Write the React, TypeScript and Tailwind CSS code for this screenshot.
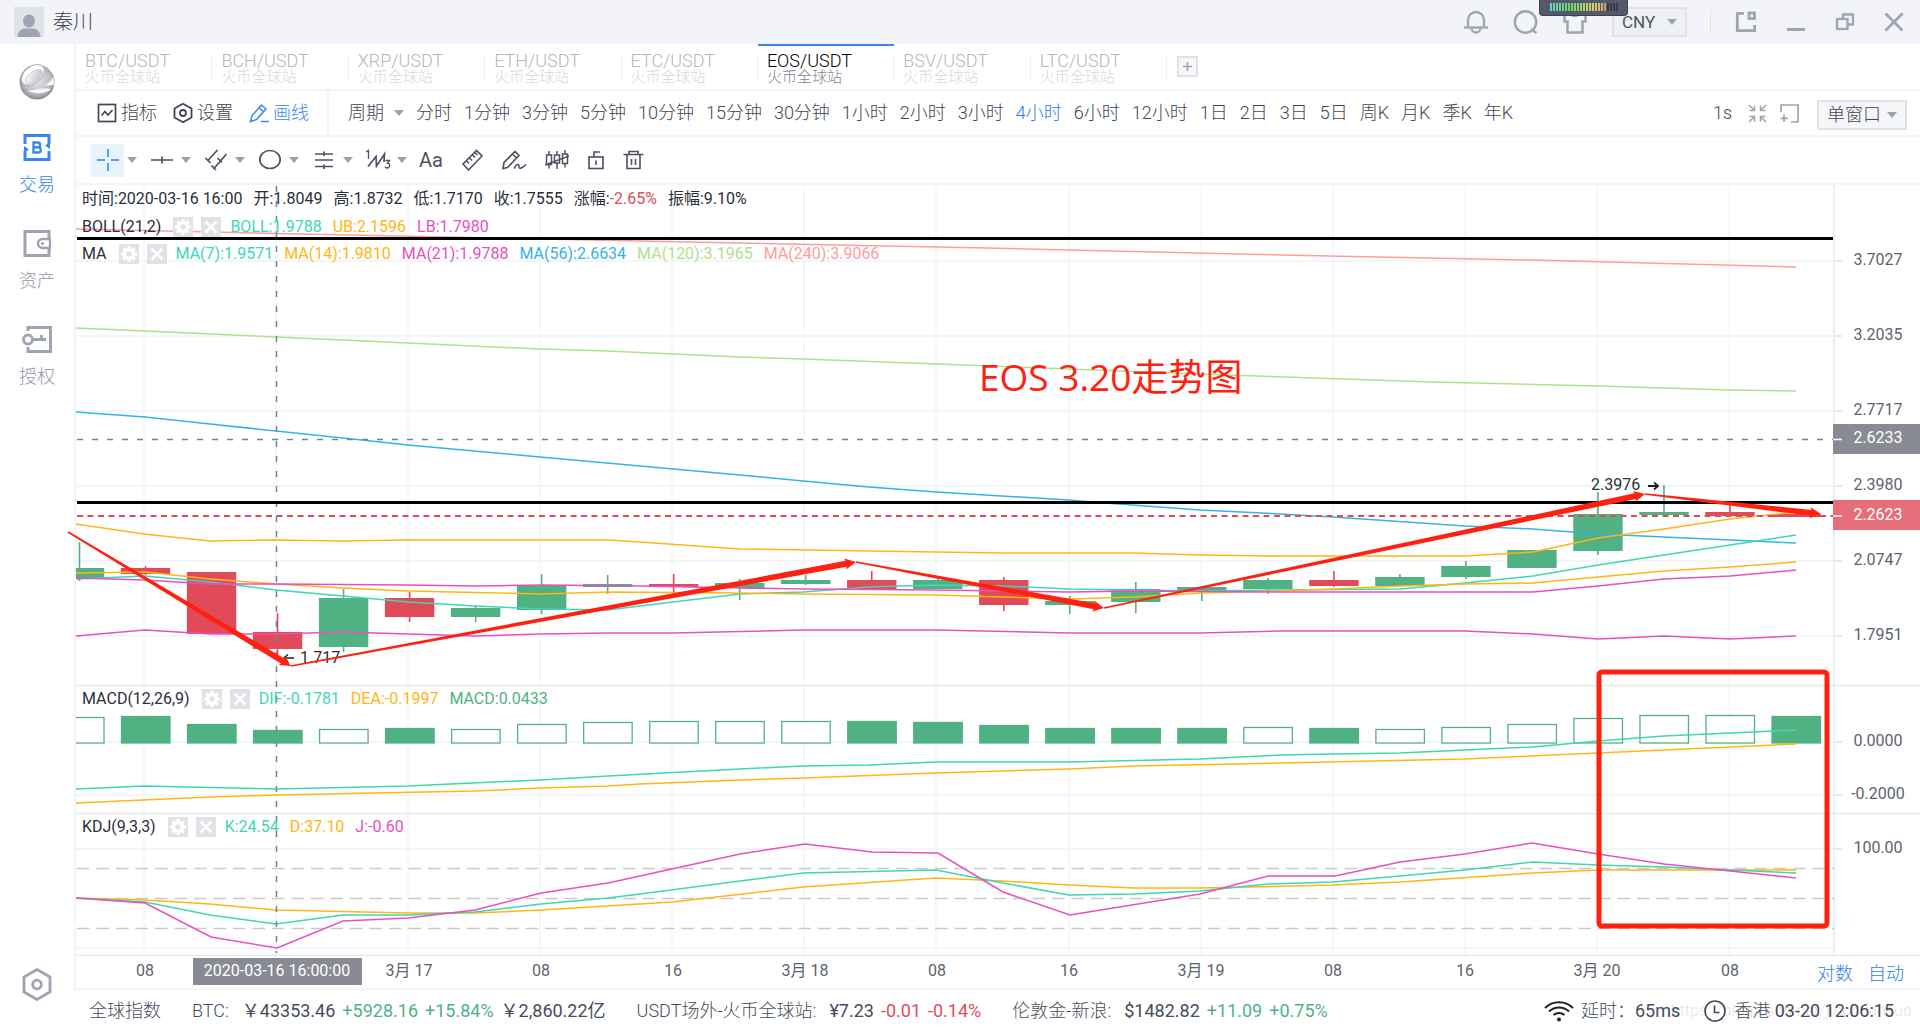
import React, { useState } from 'react';

const TEAL = '#3ed6b5';
const ORANGE = '#ffb612';
const MAGENTA = '#ea4fc0';
const BLUE = '#34b3e8';
const LIME = '#b0e08a';
const PINK = '#ff9d9a';
const GREEN = '#50b283';
const RED = '#e14b59';
const MARK = '#ff2010';

// ---------- data ----------

const pairs = ['BTC/USDT', 'BCH/USDT', 'XRP/USDT', 'ETH/USDT', 'ETC/USDT', 'EOS/USDT', 'BSV/USDT', 'LTC/USDT'];

const periods = [
  '分时', '1分钟', '3分钟', '5分钟', '10分钟', '15分钟', '30分钟', '1小时', '2小时', '3小时', '4小时',
  '6小时', '12小时', '1日', '2日', '3日', '5日', '周K', '月K', '季K', '年K',
];

// up/down, body top, body bottom, wick top, wick bottom
type Candle = ['u' | 'd', number, number, number, number];

const candles: Candle[] = [
  ['u', 568, 579, 542, 581], ['d', 568, 574, 566, 575], ['d', 572, 634, 572, 634], ['d', 632, 649, 613, 656],
  ['u', 598, 647, 589, 652], ['d', 598, 617, 592, 622], ['u', 608, 617, 606, 622], ['u', 585, 610, 574, 614],
  ['u', 584, 587, 575, 594], ['d', 584, 587, 574, 593], ['u', 583, 588, 579, 600], ['u', 580, 584, 575, 585],
  ['d', 580, 590, 571, 590], ['u', 580, 589, 578, 589], ['d', 580, 605, 577, 611], ['u', 601, 605, 596, 614],
  ['u', 589, 602, 582, 613], ['u', 587, 591, 587, 601], ['u', 580, 589, 578, 594], ['d', 580, 586, 571, 587],
  ['u', 577, 586, 574, 586], ['u', 566, 577, 561, 579], ['u', 550, 568, 550, 568], ['u', 514, 551, 492, 555],
  ['u', 512, 515, 485, 516], ['d', 512, 516, 505, 517], ['d', 514, 517, 514, 517],
];

// filled or hollow, bar top
const macdBars: ['f' | 'h', number][] = [
  ['h', 717], ['f', 716], ['f', 724], ['f', 730], ['h', 729], ['f', 728], ['h', 729], ['h', 724], ['h', 722],
  ['h', 721], ['h', 721], ['h', 721], ['f', 721], ['f', 722], ['f', 725], ['f', 728], ['f', 728], ['f', 728],
  ['h', 727], ['f', 728], ['h', 729], ['h', 727], ['h', 724], ['h', 718], ['h', 715], ['h', 715], ['f', 716],
];

const lines: { color: string; points: string }[] = [
  { color: PINK, points: '76,229 300,234 640,241 987,248 1280,255 1532,260 1796,267' },
  { color: LIME, points: '76,328 145,331 276,337 408,343 540,349 608,351 740,357 803,359 937,364 1069,369 1225,375 1433,382 1598,386 1730,390 1796,391' },
  { color: BLUE, points: '76,412 145,417 210,424 276,431 343,438 408,445 540,457 640,466 740,475 803,481 869,487 936,492 1069,500 1105,503 1200,510 1280,514 1333,517 1465,526 1533,529 1598,534 1664,537 1796,543' },
  { color: ORANGE, points: '76,524 144,534 210,541 276,540 343,541 408,540 608,540 640,542 740,549 870,551 936,552 1003,553 1134,553 1200,555 1280,556 1465,556 1533,552 1598,538 1664,529 1730,519 1796,512' },
  { color: TEAL, points: '76,579 145,576 210,582 276,590 343,596 408,602 475,606 541,609 608,610 640,606 740,594 803,592 869,587 936,585 1003,586 1069,589 1134,590 1200,591 1280,590 1400,589 1465,583 1533,576 1598,565 1664,555 1730,545 1796,535' },
  { color: ORANGE, points: '76,573 145,572 210,579 276,584 343,588 408,591 541,594 608,592 740,593 803,594 936,595 1003,597 1069,599 1134,597 1200,593 1280,591 1333,589 1400,586 1465,584 1533,583 1598,577 1664,571 1730,567 1796,562' },
  { color: MAGENTA, points: '76,578 145,580 210,584 276,584 408,585 475,586 541,585 640,586 740,588 803,589 936,590 1069,592 1134,591 1280,592 1533,592 1598,586 1664,579 1730,576 1796,570' },
  { color: MAGENTA, points: '76,636 145,630 210,634 276,634 343,632 408,634 475,636 541,634 608,633 673,633 803,630 936,630 1069,633 1200,633 1280,631 1465,631 1533,634 1598,639 1664,636 1730,639 1796,636' },
  { color: ORANGE, points: '76,803 210,797 276,795 475,791 540,788 608,786 640,784 740,780 803,778 936,773 1069,769 1134,766 1280,763 1465,759 1598,753 1730,747 1796,744' },
  { color: TEAL, points: '76,789 145,786 276,789 408,786 540,780 608,776 740,769 803,766 869,765 936,762 1069,762 1200,759 1280,755 1333,754 1400,753 1465,750 1533,747 1598,741 1664,736 1796,730' },
  { color: ORANGE, points: '76,898 145,900 210,904 276,910 408,913 475,913 541,910 640,904 673,902 803,887 936,878 1003,881 1069,885 1134,888 1200,888 1333,885 1400,882 1533,873 1598,870 1796,870' },
  { color: TEAL, points: '76,898 145,902 210,915 276,924 343,915 408,915 475,912 541,904 608,898 640,894 740,881 803,873 936,870 1003,883 1069,895 1134,894 1200,891 1268,884 1333,882 1400,876 1465,870 1533,862 1598,865 1664,867 1730,870 1796,873' },
  { color: MAGENTA, points: '76,898 145,903 211,937 277,948 343,921 408,918 475,910 541,893 608,883 640,876 740,854 805,844 872,852 938,853 1003,892 1070,915 1200,894 1268,876 1335,876 1400,862 1465,854 1532,843 1598,854 1664,864 1730,871 1796,878' },
];

const gridX = [144, 276, 408, 540, 672, 804, 936, 1069, 1201, 1333, 1465, 1597, 1729];
const gridY: [number, string][] = [
  [261, '3.7027'], [336, '3.2035'], [411, '2.7717'], [486, '2.3980'], [561, '2.0747'], [636, '1.7951'],
  [742, '0.0000'], [795, '-0.2000'], [849, '100.00'], [948, ''],
];
const xLabels: [number, string][] = [
  [145, '08'], [409, '3月 17'], [541, '08'], [673, '16'], [805, '3月 18'], [937, '08'], [1069, '16'],
  [1201, '3月 19'], [1333, '08'], [1465, '16'], [1597, '3月 20'], [1730, '08'],
];
const trend: [number, number][] = [[68, 532], [291, 666], [856, 562], [1104, 608], [1645, 494], [1821, 514]];

// ---------- small parts ----------

interface CaretProps {
  className?: string;
}

const Caret: React.FC<CaretProps> = ({ className = '' }) => (
  <svg viewBox="0 0 10 6" className={`h-1.5 w-2.5 shrink-0 fill-[#9aa1ae] ${className}`}>
    <path d="M0 0h10L5 6z" />
  </svg>
);

const GearBox = () => (
  <button aria-label="设置" className="h-5 w-5 bg-[#dfe2e7]">
    <svg viewBox="0 0 20 20" className="h-5 w-5">
      <circle cx="10" cy="10" r="4.4" fill="none" stroke="#fff" strokeWidth="3.4" />
      <g stroke="#fff" strokeWidth="3.2">
        <path d="M10 2v3M10 15v3M2 10h3M15 10h3M4.3 4.3l2 2M13.7 13.7l2 2M4.3 15.7l2-2M13.7 6.3l2-2" />
      </g>
    </svg>
  </button>
);

const CloseBox = () => (
  <button aria-label="关闭" className="h-5 w-5 bg-[#dfe2e7]">
    <svg viewBox="0 0 20 20" className="h-5 w-5">
      <path d="M4.500 4.500l11 11M15.500 4.500l-11 11" stroke="#fff" strokeWidth="2.800" />
    </svg>
  </button>
);

interface LegendProps {
  name: string;
  values: { text: string; color: string }[];
  className?: string;
}

const Legend: React.FC<LegendProps> = ({ name, values, className = '' }) => (
  <div className={`flex h-[27px] items-center gap-2 ${className}`}>
    <span className="mr-1">{name}</span>
    <GearBox />
    <CloseBox />
    <div className="ml-px flex gap-[11px]">
      {values.map((v) => (
        <span key={v.text} className={v.color}>{v.text}</span>
      ))}
    </div>
  </div>
);

// ---------- header ----------

const Header = () => (
  <header className="relative flex h-11 items-center bg-[#f3f4f8] pl-3.5 pr-4 font-light text-[#9ea4b0]">
    <svg viewBox="0 0 30 30" className="h-[30px] w-[30px]">
      <rect width="30" height="30" fill="#dfe2e7" />
      <ellipse cx="15" cy="14" rx="6" ry="6.500" fill="#9ea4b0" />
      <path d="M3.500 30c0-5.500 4-8.500 8-8.500h7c4 0 8 3 8 8.500z" fill="#9ea4b0" />
    </svg>
    <span className="ml-[9px] text-xl leading-7 text-[#3f4655]">秦川</span>

    <div className="ml-auto flex items-center gap-[25px]">
      <button aria-label="通知">
        <svg viewBox="0 0 24 24" className="h-6 w-6" fill="none" stroke="currentColor" strokeWidth="2.300">
          <path d="M4 17.500V10a8 8 0 0 1 16 0v7.500" />
          <path d="M0 17.500h24" />
          <path d="M7.500 18a4.500 4.500 0 0 0 9 0" />
        </svg>
      </button>
      <button aria-label="搜索">
        <svg viewBox="0 0 25 24" className="h-6 w-[25px]" fill="none" stroke="currentColor" strokeWidth="2.400">
          <circle cx="12.500" cy="12" r="10.700" />
          <path d="M18 19l5.500 4" />
        </svg>
      </button>
      <button aria-label="皮肤">
        <svg viewBox="0 0 24 24" className="h-6 w-6" fill="none" stroke="currentColor" strokeWidth="2.500">
          <path d="M1.500 3.500H8c1 3 7 3 8 0h6.500v8H19.500V22.500h-15V11.500h-3z" />
        </svg>
      </button>
      <label className="relative flex items-center">
        <select aria-label="货币" className="h-[30px] w-[75px] appearance-none border-2 border-[#dfe2e8] bg-[#eef0f4] pl-2 text-[17px] font-normal leading-6 text-[#4b5263]">
          <option>CNY</option>
        </select>
        <Caret className="pointer-events-none absolute right-2.5" />
      </label>
    </div>
    <div className="ml-[23px] h-6 w-px bg-[#dfe2e8]" />
    <div className="ml-6 flex items-center gap-[29px]">
      <button aria-label="弹出">
        <svg viewBox="0 0 22 22" className="h-[22px] w-[22px]" fill="none" stroke="currentColor" strokeWidth="2.800">
          <path d="M9 2.300H2.300v17.400h17.400V14" />
          <rect x="14" y="2" width="5.500" height="5.500" />
        </svg>
      </button>
      <button aria-label="最小化">
        <svg viewBox="0 0 20 22" className="h-[22px] w-5">
          <path d="M1 18.500h18" stroke="currentColor" strokeWidth="3" />
        </svg>
      </button>
      <button aria-label="还原">
        <svg viewBox="0 0 20 20" className="h-5 w-5" fill="none" stroke="currentColor" strokeWidth="2.300">
          <path d="M8 7V2.500h10v10h-5" />
          <rect x="2" y="7" width="10.500" height="10" />
        </svg>
      </button>
      <button aria-label="关闭窗口">
        <svg viewBox="0 0 20 20" className="h-5 w-5" stroke="currentColor" strokeWidth="2.800">
          <path d="M1.500 1.500l17 17M18.500 1.500l-17 17" />
        </svg>
      </button>
    </div>

    {/* level meter docked to the screen edge */}
    <div className="absolute right-[292px] top-0 z-10 h-4 w-[89px] rounded-b border border-t-0 border-[#3c424f] bg-[#545a69]">
      <div className="ml-2.5 mt-[3px] flex gap-px">
        {Array.from({ length: 23 }, (_, i) => (
          <i
            key={i}
            className="h-2 w-0.5"
            style={{ background: i < 19 ? `hsl(${165 - i * 7.5} 55% 62%)` : '#373c48' }}
          />
        ))}
      </div>
    </div>
  </header>
);

// ---------- sidebar ----------

const Sidebar = () => (
  <aside className="flex w-[74px] shrink-0 flex-col items-center pb-[27px] pt-5 text-lg font-light leading-6 text-[#9097a5]">
    <svg viewBox="0 0 36 36" className="h-9 w-9">
      <defs>
        <radialGradient id="ball" cx="0.5" cy="0.45" r="0.55">
          <stop offset="0" stopColor="#e9e9eb" />
          <stop offset="0.7" stopColor="#bcbdc2" />
          <stop offset="1" stopColor="#85878f" />
        </radialGradient>
        <linearGradient id="ring" x1="0" y1="0" x2="1" y2="1">
          <stop offset="0" stopColor="#ffffff" />
          <stop offset="1" stopColor="#b9babf" />
        </linearGradient>
      </defs>
      <circle cx="18" cy="18" r="17.500" fill="url(#ball)" />
      <ellipse cx="14" cy="11" rx="13" ry="8.500" transform="rotate(-38 14 11)" fill="#fff" stroke="#a9aab0" strokeWidth="0.800" />
      <ellipse cx="15" cy="13" rx="10" ry="5.500" transform="rotate(-38 15 13)" fill="url(#ring)" stroke="#c9cace" strokeWidth="0.800" />
      <path d="M34 13c1 3 1 5 .5 8l-9 .5c4-2 7-4.500 8.500-8.500z" fill="#fff" />
      <path d="M9 27c8-2 15-3 23-2-4 4-12 6-23 2z" fill="#f6f6f7" />
    </svg>

    <button className="mt-[34px] flex flex-col items-center gap-3 text-[#3a86f0]">
      <svg viewBox="0 0 28 27" className="h-[27px] w-7" fill="none" stroke="currentColor" strokeWidth="3">
        <path d="M2 10V1.500h24V10M2 17v8.500h24V17" />
        <path d="M1 12l5 3.500L1 19z M27 8l-5 3.500 5 3.500z" fill="currentColor" stroke="none" />
        <path d="M10.500 8.500h4.200a2.400 2.400 0 0 1 0 4.800h-4.200zM10.500 13.300h4.700a2.600 2.600 0 0 1 0 5.200h-4.700z" strokeWidth="2.400" />
      </svg>
      交易
    </button>
    <button className="mt-[33px] flex flex-col items-center gap-3">
      <svg viewBox="0 0 28 27" className="h-[27px] w-7" fill="none" stroke="#9ea4b0" strokeWidth="3">
        <path d="M26 9V1.500H2v24h24V18" />
        <path d="M27 9h-7.500a4.500 4.500 0 0 0 0 9H27z" strokeWidth="2.400" />
        <circle cx="19.500" cy="13.500" r="1.600" fill="#9ea4b0" stroke="none" />
      </svg>
      资产
    </button>
    <button className="mt-[33px] flex flex-col items-center gap-3">
      <svg viewBox="0 0 30 27" className="h-[27px] w-[30px]" fill="none" stroke="#9ea4b0" strokeWidth="3">
        <path d="M6 5V1.500h22.500v24H6V21" />
        <circle cx="6" cy="13.500" r="4.500" strokeWidth="2.800" />
        <path d="M10 13.500h14M19.500 13.500V9" strokeWidth="2.800" />
      </svg>
      授权
    </button>

    <button aria-label="系统设置" className="mt-auto">
      <svg viewBox="0 0 30 33" className="h-[33px] w-[30px]" fill="none" stroke="#9ea4b0" strokeWidth="2.800">
        <path d="M15 1.500l13 7.500v15l-13 7.500L2 24V9z" />
        <circle cx="15" cy="16.500" r="4.300" />
      </svg>
    </button>
  </aside>
);

// ---------- bars above the chart ----------

const PairTabs: React.FC<{ active: string; onSelect: (pair: string) => void }> = ({ active, onSelect }) => (
  <nav className="flex h-[47px] items-start border-b-2 border-[#f3f4f8] font-light">
    <div className="grid w-[1091px] grid-cols-8">
      {pairs.map((pair) => (
        <button
          key={pair}
          onClick={() => onSelect(pair)}
          className={`relative flex h-[45px] flex-col border-t-2 pl-[9px] pt-1.5 text-left ${
            pair === active ? 'border-[#3a86f0] text-black' : 'border-transparent text-[#b4b7bd]'
          }`}
        >
          <span className="text-lg leading-[18px]">{pair}</span>
          <span className={`text-[15px] leading-[14px] ${pair === active ? 'text-[#7f8694]' : 'text-[#d6d9df]'}`}>火币全球站</span>
          <i className="absolute right-0 top-2.5 h-6 w-px bg-[#eceef3]" />
        </button>
      ))}
    </div>
    <button aria-label="添加" className="ml-2.5 mt-3 h-[21px] w-[21px] border-2 border-[#dfe2e8] bg-[#f5f6f8]">
      <svg viewBox="0 0 17 17" className="h-[17px] w-[17px] stroke-[#9ea4b0]">
        <path d="M8.500 4v9M4 8.500h9" strokeWidth="1.600" />
      </svg>
    </button>
  </nav>
);

const PeriodBar: React.FC<{ active: string; onSelect: (p: string) => void }> = ({ active, onSelect }) => (
  <div className="flex h-[46px] items-center whitespace-nowrap border-b-2 border-[#f3f4f8] pl-[21px] pr-[13px] text-lg font-light leading-6 text-[#3f4655]">
    <div className="flex gap-4">
      <button className="flex items-center gap-1">
        <svg viewBox="0 0 20 20" className="h-5 w-5" fill="none" stroke="currentColor" strokeWidth="1.700">
          <rect x="1.500" y="1.500" width="17" height="17" />
          <path d="M4.500 12.500l3.500-4 3 3.500 4.500-5" />
        </svg>
        指标
      </button>
      <button className="flex items-center gap-1">
        <svg viewBox="0 0 20 20" className="h-5 w-5" fill="none" stroke="currentColor" strokeWidth="1.800">
          <path d="M10 .8l8.500 4.700v9L10 19.200 1.500 14.500v-9z" />
          <circle cx="10" cy="10" r="3" />
        </svg>
        设置
      </button>
      <button className="flex items-center gap-1 text-[#3a86f0]">
        <svg viewBox="0 0 20 20" className="h-5 w-5" fill="none" stroke="currentColor" strokeWidth="1.500">
          <path d="M1.500 18.500l1.500-6L12.500 2l4.500 4L7.500 16.500zM10 4.800l4.500 4M12 18.500h8" />
        </svg>
        画线
      </button>
    </div>
    <div className="ml-[18px] flex h-11 items-center gap-3 border-l-2 border-[#f3f4f8] pl-[19px]">
      <button className="flex items-center gap-2.5">
        周期
        <Caret />
      </button>
      {periods.map((p) => (
        <button key={p} onClick={() => onSelect(p)} className={p === active ? 'text-[#2f7cf0]' : ''}>
          {p}
        </button>
      ))}
    </div>
    <div className="ml-auto flex items-center">
      <span>1s</span>
      <button aria-label="收起" className="ml-4">
        <svg viewBox="0 0 19 19" className="h-[19px] w-[19px]" fill="none" stroke="#9ea4b0" strokeWidth="1.500">
          <path d="M1 1l5 5M6.500 1.500v5h-5M18 1l-5 5M12.500 1.500v5h5M1 18l5-5M6.500 17.500v-5h-5M18 18l-5-5M12.500 17.500v-5h5" />
        </svg>
      </button>
      <button aria-label="新建窗口" className="ml-[13px]">
        <svg viewBox="0 0 19 19" className="h-[19px] w-[19px]" fill="none" stroke="#9ea4b0" strokeWidth="1.700">
          <path d="M1 8V1h17v17h-7M4 10.500v7.500M.5 14.300h7.500" />
        </svg>
      </button>
      <label className="relative ml-[18px] mt-1 flex items-center">
        <select aria-label="窗口" className="h-[30px] w-[90px] appearance-none border-2 border-[#dfe2e8] bg-[#f5f6f8] pl-2 leading-6">
          <option>单窗口</option>
        </select>
        <Caret className="pointer-events-none absolute right-2.5" />
      </label>
    </div>
  </div>
);

const shapeTools: { label: string; icon: React.ReactNode }[] = [
  { label: '十字线', icon: <path d="M12 1v8M12 15v8M1 12h8M15 12h8" stroke="#5b9ff5" strokeWidth="2" /> },
  { label: '水平线', icon: <path d="M1 12h22M12 8.500v7" /> },
  {
    label: '通道',
    icon: <path d="M3.500 13L13.500 2M1.500 10l5 5M9.500 21L22.500 6M7.500 17.500l4.500 4.500M13.500 10l4.500 4.500" />,
  },
  { label: '圆形', icon: <ellipse cx="12" cy="11.500" rx="10.200" ry="9" /> },
  { label: '平行线', icon: <path d="M3 6h18M3 12h18M3 18.500h18M12 3.500v4.500M12 16.500v4.500" /> },
  {
    label: '波浪',
    icon: (
      <>
        <path d="M2 18.500L10 8.500l.5 9.500L18.500 6l-.5 8" />
        <path d="M0 4l2.500-1.500V11M19.500 12.500h4L21.500 15c3 0 3 5-.5 5-1.200 0-1.700-.5-2-1.200" strokeWidth="1.300" />
      </>
    ),
  },
];

const DrawBar = () => (
  <div className="flex h-12 items-center border-b-2 border-[#f3f4f8] pl-[15px]">
    {shapeTools.map((tool, i) => (
      <div key={tool.label} className="flex w-[54px] items-center gap-[3px]">
        <button
          aria-label={tool.label}
          className={`flex h-[33px] w-[33px] items-center justify-center ${i === 0 ? 'bg-[#e8f4fd]' : ''}`}
        >
          <svg viewBox="0 0 24 24" className="h-6 w-6 overflow-visible" fill="none" stroke="currentColor" strokeWidth="1.700">
            {tool.icon}
          </svg>
        </button>
        <Caret />
      </div>
    ))}
    <div className="flex items-center gap-[19px] pl-1">
      <button className="text-xl leading-6">Aa</button>
      <button aria-label="测量">
        <svg viewBox="0 0 21 22" className="h-[22px] w-[21px]" fill="none" stroke="currentColor" strokeWidth="1.600">
          <path d="M1 15L14.500 1.500l5.500 5.500L6.500 21zM4.500 12l2.500 2.500M7.500 9l2.500 2.500M10.500 6l2.500 2.500M13 3.500l2.500 2.500" />
        </svg>
      </button>
      <button aria-label="画笔">
        <svg viewBox="0 0 24 22" className="h-[22px] w-6" fill="none" stroke="currentColor" strokeWidth="1.600">
          <path d="M1 19.500l1-6L13 2.500l4 4-11.500 12zM10.500 5l4 4M12 19.500c3-5 5-5 5-2s3 2 7-2" />
        </svg>
      </button>
      <button aria-label="隐藏K线">
        <svg viewBox="0 0 24 22" className="h-[22px] w-6" fill="none" stroke="currentColor" strokeWidth="1.500">
          <rect x="1.500" y="6" width="5" height="9.500" />
          <rect x="9.500" y="6" width="5" height="8" />
          <rect x="17.500" y="5" width="5" height="9.500" />
          <path d="M4 2v4M4 15.500v4M12 2v4M12 14v6M20 1v4M20 14.500v4M0 16L24 7" />
        </svg>
      </button>
      <button aria-label="锁定">
        <svg viewBox="0 0 16 20" className="h-5 w-4" fill="none" stroke="currentColor" strokeWidth="1.600">
          <rect x="1" y="7" width="14" height="11.500" />
          <path d="M6 7V2h6M8 10.500v4.500" />
        </svg>
      </button>
      <button aria-label="删除">
        <svg viewBox="0 0 21 20" className="h-5 w-[21px]" fill="none" stroke="currentColor" strokeWidth="1.600">
          <path d="M.5 4.500h20M4 4.500v14h13v-14M6 4.500v-3h9v3M8.500 9v6M12.500 9v6" />
        </svg>
      </button>
    </div>
  </div>
);

// ---------- chart ----------

// thin at the tail, thick at the head
const arrowPoints = ([x1, y1]: [number, number], [x2, y2]: [number, number]) => {
  const len = Math.hypot(x2 - x1, y2 - y1);
  const ux = (x2 - x1) / len;
  const uy = (y2 - y1) / len;
  const at = (d: number, off: number) => `${x1 + ux * d - uy * off},${y1 + uy * d + ux * off}`;
  return [
    at(0, 0.8), at(len - 10, 3), at(len - 11, 5.5), at(len, 0), at(len - 11, -5.5), at(len - 10, -3), at(0, -0.8),
  ].join(' ');
};

const centerOf = (i: number) => 79.5 + i * 66.02;

const Chart = () => (
  <section className="relative border-b-2 border-[#f3f4f8] text-base leading-6 text-[#2b2f3a]">
    <svg viewBox="76 185 1844 803" className="block w-full overflow-visible">
      <defs>
        <clipPath id="plot">
          <rect x="76" y="185" width="1758" height="771" />
        </clipPath>
      </defs>

      <g stroke="#f2f5f9" strokeWidth="2">
        {gridX.map((x) => <path key={x} d={`M${x} 185V955`} strokeWidth="1.500" />)}
        {gridY.map(([y]) => <path key={y} d={`M76 ${y}H1834`} />)}
      </g>
      <g stroke="#e6e9ee" strokeWidth="1.500">
        <path d="M76 685.500H1920M76 813.500H1920M76 955.500H1920M1834 185V955" />
        {gridY.filter(([, t]) => t).map(([y]) => <path key={y} d={`M1834 ${y}h8`} strokeWidth="2" />)}
      </g>
      <g stroke="#c9c9c9" strokeWidth="1.500" strokeDasharray="12.500 7">
        <path d="M77 868.500H1834M77 898.500H1834M77 928.500H1834" />
      </g>

      <g clipPath="url(#plot)">
        {candles.map(([dir, top, bottom, high, low], i) => (
          <g key={i} fill={dir === 'u' ? GREEN : RED}>
            <rect x={centerOf(i) - 0.8} y={high} width="1.600" height={low - high} />
            <rect x={centerOf(i) - 24.7} y={top} width="49.400" height={bottom - top} />
          </g>
        ))}
        {macdBars.map(([kind, top], i) => (
          <rect
            key={i}
            x={centerOf(i) - 24}
            y={top + 0.5}
            width="48.500"
            height={742.5 - top}
            fill={kind === 'f' ? GREEN : '#fff'}
            stroke={GREEN}
            strokeWidth="1.300"
          />
        ))}
        {lines.map((l, i) => (
          <polyline key={i} points={l.points} fill="none" stroke={l.color} strokeWidth="1.500" />
        ))}
      </g>

      <g fill="none">
        <path d="M276.500 186V953" stroke="#6f8598" strokeWidth="1.500" strokeDasharray="6 9" />
        <path d="M77 439.500H1834" stroke="#6f8598" strokeWidth="1.500" strokeDasharray="6 9" />
        <path d="M77 516H1834" stroke="#e14b59" strokeWidth="1.800" strokeDasharray="6 4.500" />
        <path d="M77 238.500H1833M77 502.500H1833" stroke="#000" strokeWidth="3" />
      </g>

      <text x="1591" y="490" fontSize="16" fill="#2b2f3a">2.3976</text>
      <path d="M1648 486h9M1654 482.500l4 3.500-4 3.500" fill="none" stroke="#1c1f26" strokeWidth="1.800" />
      <text x="300" y="663" fontSize="16" fill="#2b2f3a">1.717</text>
      <path d="M294 658h-9M288 654.500l-4 3.500 4 3.500" fill="none" stroke="#1c1f26" strokeWidth="1.500" />

      <g fontSize="16" fill="#5c6370" textAnchor="middle">
        {gridY.map(([y, t]) => <text key={y} x="1878" y={y + 4}>{t}</text>)}
        {xLabels.map(([x, t]) => <text key={x} x={x} y="976">{t}</text>)}
        <rect x="193" y="958" width="169" height="27" fill="#888b93" />
        <text x="277" y="976" fill="#fff">2020-03-16 16:00:00</text>
        <rect x="1833" y="424" width="87" height="30" fill="#888b93" />
        <text x="1878" y="443" fill="#fff">2.6233</text>
        <rect x="1833" y="500" width="87" height="30" fill="#e66d7a" />
        <text x="1878" y="520" fill="#fff">2.2623</text>
        <path d="M1833 439.500h9M1833 516h9" stroke="#fff" strokeWidth="1.500" />
      </g>

      {/* hand-drawn marks */}
      <g fill={MARK}>
        {trend.slice(1).map((end, i) => <polygon key={i} points={arrowPoints(trend[i], end)} />)}
        <text x="979" y="391" fontSize="37" className="font-['Open_Sans','Noto_Sans_CJK_SC',sans-serif]">EOS 3.20走势图</text>
      </g>
      <rect x="1599" y="672" width="228" height="254" rx="3" fill="none" stroke={MARK} strokeWidth="5" />
    </svg>

    <div className="absolute left-1.5 top-0 whitespace-nowrap">
      <div className="flex h-7 items-center gap-[11px]">
        <span>时间:2020-03-16 16:00</span>
        <span>开:1.8049</span>
        <span>高:1.8732</span>
        <span>低:1.7170</span>
        <span>收:1.7555</span>
        <span>涨幅:<span className="text-[#e14b59]">-2.65%</span></span>
        <span>振幅:9.10%</span>
      </div>
      <Legend
        name="BOLL(21,2)"
        values={[
          { text: 'BOLL:1.9788', color: 'text-[#3ed6b5]' },
          { text: 'UB:2.1596', color: 'text-[#ffb612]' },
          { text: 'LB:1.7980', color: 'text-[#ea4fc0]' },
        ]}
      />
      <Legend
        name="MA"
        values={[
          { text: 'MA(7):1.9571', color: 'text-[#3ed6b5]' },
          { text: 'MA(14):1.9810', color: 'text-[#ffb612]' },
          { text: 'MA(21):1.9788', color: 'text-[#ea4fc0]' },
          { text: 'MA(56):2.6634', color: 'text-[#34b3e8]' },
          { text: 'MA(120):3.1965', color: 'text-[#b0e08a]' },
          { text: 'MA(240):3.9066', color: 'text-[#ff9d9a]' },
        ]}
      />
    </div>
    <Legend
      className="absolute left-1.5 top-[500px]"
      name="MACD(12,26,9)"
      values={[
        { text: 'DIF:-0.1781', color: 'text-[#3ed6b5]' },
        { text: 'DEA:-0.1997', color: 'text-[#ffb612]' },
        { text: 'MACD:0.0433', color: 'text-[#50b283]' },
      ]}
    />
    <Legend
      className="absolute left-1.5 top-[628px]"
      name="KDJ(9,3,3)"
      values={[
        { text: 'K:24.54', color: 'text-[#3ed6b5]' },
        { text: 'D:37.10', color: 'text-[#ffb612]' },
        { text: 'J:-0.60', color: 'text-[#ea4fc0]' },
      ]}
    />
    <div className="absolute bottom-0.5 right-4 flex gap-[15px] text-lg font-light leading-6 text-[#2f7cf0]">
      <button>对数</button>
      <button>自动</button>
    </div>
  </section>
);

// ---------- footer ----------

interface QuoteProps {
  name: string;
  price: string;
  change: string[];
  up: boolean;
  extra?: string;
}

const Quote: React.FC<QuoteProps> = ({ name, price, change, up, extra }) => (
  <div className="flex gap-[7px] font-normal">
    <span className="mr-1.5 font-light">{name}</span>
    <span>{price}</span>
    {change.map((c) => (
      <span key={c} className={up ? 'text-[#50b283]' : 'text-[#e14b59]'}>{c}</span>
    ))}
    {extra && <span>{extra}</span>}
  </div>
);

const Footer = () => (
  <footer className="relative flex h-[38px] items-center whitespace-nowrap pl-[15px] pr-[26px] pt-1 text-lg font-light leading-6 text-[#454c5c]">
    <div className="flex gap-[31px]">
      <span>全球指数</span>
      <Quote name="BTC:" price="￥43353.46" change={['+5928.16', '+15.84%']} up extra="￥2,860.22亿" />
      <Quote name="USDT场外-火币全球站:" price="¥7.23" change={['-0.01', '-0.14%']} up={false} />
      <Quote name="伦敦金-新浪:" price="$1482.82" change={['+11.09', '+0.75%']} up />
    </div>
    <div className="ml-auto flex items-center">
      <svg viewBox="0 0 30 22" className="mr-[7px] h-[22px] w-[30px]" fill="none" stroke="#1c1f26" strokeWidth="2">
        <path d="M1 8a20 20 0 0 1 28 0M5 11.500a14.500 14.500 0 0 1 20 0M9.500 15a8.500 8.500 0 0 1 11 0" />
        <circle cx="15" cy="19.500" r="2" fill="#1c1f26" stroke="none" />
      </svg>
      <span>延时：<span className="font-normal">65ms</span></span>
      <svg viewBox="0 0 22 22" className="ml-6 mr-2 h-[22px] w-[22px]" fill="none" stroke="currentColor" strokeWidth="1.600">
        <circle cx="11" cy="11" r="10" />
        <path d="M10.500 5.500v7h5" />
      </svg>
      <span>香港 <span className="font-normal">03-20 12:06:15</span></span>
    </div>
    <span className="pointer-events-none absolute right-2 text-base font-normal text-black/10">https://blog.csdn.net/jinchuansuo</span>
  </footer>
);

const App: React.FC = () => {
  const [pair, setPair] = useState('EOS/USDT');
  const [period, setPeriod] = useState('4小时');

  return (
    <div className="flex min-h-screen flex-col overflow-hidden bg-white font-['Roboto','Noto_Sans_CJK_SC',sans-serif] text-[#4b5263]">
      <Header />
      <div className="flex flex-1">
        <Sidebar />
        <main className="min-w-0 flex-1">
          <div className="border-l-2 border-[#f3f4f8]">
            <PairTabs active={pair} onSelect={setPair} />
            <PeriodBar active={period} onSelect={setPeriod} />
            <DrawBar />
            <Chart />
          </div>
          <Footer />
        </main>
      </div>
    </div>
  );
};

export default App;
